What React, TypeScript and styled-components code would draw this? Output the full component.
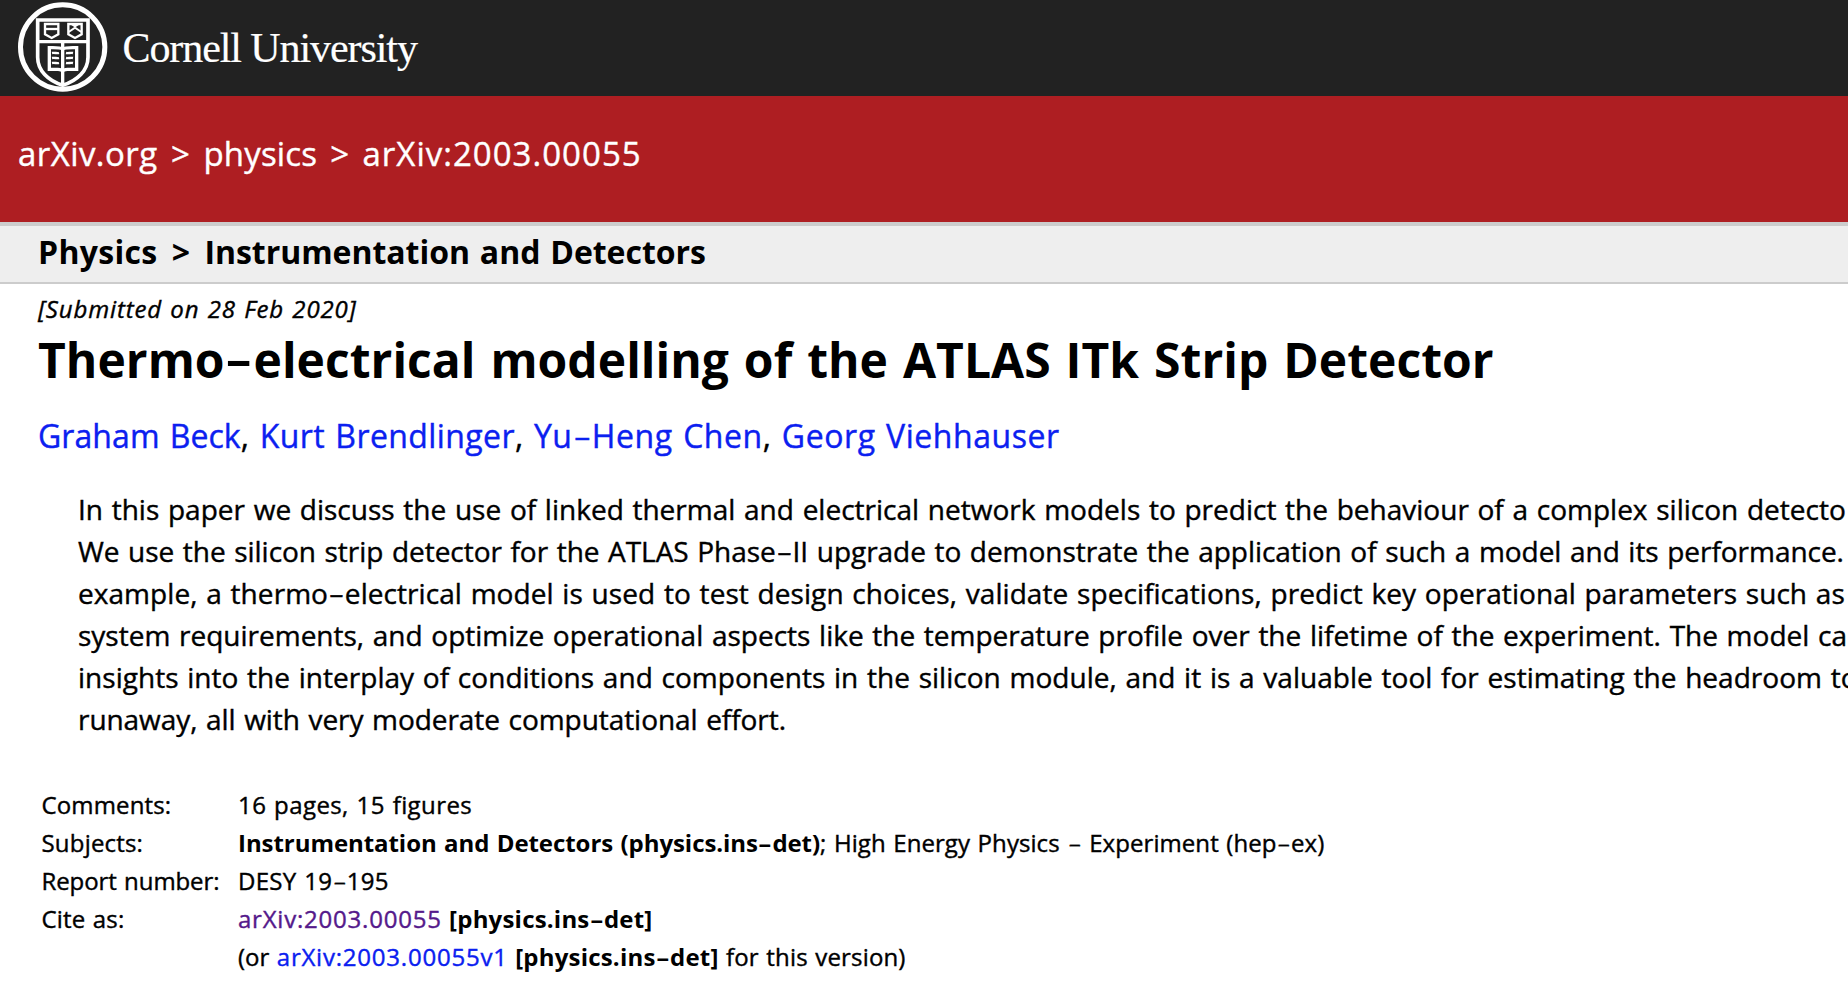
import React from "react";
import styled, { createGlobalStyle } from "styled-components";

const GlobalStyle = createGlobalStyle`
  * { box-sizing: border-box; word-spacing: 0.05em; }
  html, body { margin: 0; padding: 0; }
  body {
    background: #fff;
    color: #000;
    font-family: "Lucida Grande", "Open Sans", sans-serif;
    overflow: hidden;
  }
`;

const Page = styled.div`
  width: 100%;
  height: 988px;
  overflow: hidden;
  white-space: nowrap;
  -webkit-text-stroke: 0.4px currentColor;
`;

const UniversityBar = styled.div`
  display: flex;
  height: 96px;
  background: #222;
`;

const Seal = styled.svg`
  flex: none;
  width: 120px;
  height: 96px;
`;

const UniversityName = styled.div`
  padding-top: 24px;
  padding-left: 2.5px;
  font-family: "Palatino Linotype", "Liberation Serif", serif;
  font-size: 42px;
  line-height: 48px;
  letter-spacing: -1.08px;
  word-spacing: 0;
  color: #fff;
  -webkit-text-stroke-width: 0.2px;
`;

const Tracked = styled.span<{ $em: number }>`
  letter-spacing: ${(p) => p.$em}em;
`;

const WideHyphen = styled.span`
  display: inline-block;
  margin: 0 0.14em;
  letter-spacing: 0;
  transform: translateY(-0.05em) scale(1.7, 0.85);
  transform-origin: 50% 76%;
`;

const Chevron = styled.span<{ $gap: number }>`
  margin: 0 ${(p) => p.$gap}em;
`;

const Breadcrumbs = styled.nav`
  height: 126px;
  padding: 38px 0 0 18px;
  background: #ae1e22;
  color: #fff;
  font-size: 33px;
  line-height: 40px;
`;

const SubjectBar = styled.div`
  height: 62px;
  padding-left: 38px;
  border-top: 4px solid #ccc;
  border-bottom: 2px solid #ccc;
  background: #eee;
  font-size: 32px;
  font-weight: 700;
  line-height: 51px;
  -webkit-text-stroke-width: 0;
`;

const Article = styled.main`
  padding: 10px 0 0 38px;
`;

const Dateline = styled.div`
  font-size: 24px;
  font-style: italic;
  line-height: 30px;
  letter-spacing: 0.036em;
`;

const Title = styled.h1`
  margin: 7px 0 0;
  font-size: 48px;
  font-weight: 700;
  line-height: 58px;
  letter-spacing: 0.0008em;
  -webkit-text-stroke-width: 0;
`;

const Authors = styled.div`
  margin-top: 27px;
  font-size: 32px;
  line-height: 40px;
  letter-spacing: 0.0125em;
`;

const Link = styled.a<{ $visited?: boolean }>`
  color: ${(p) => (p.$visited ? "#551a8b" : "#0b20f0")};
  text-decoration: none;
`;

const Abstract = styled.blockquote`
  margin: 32px 0 0 40px;
  font-size: 28px;
  line-height: 42px;
`;

const Line = styled.div<{ $em: number }>`
  letter-spacing: ${(p) => p.$em}em;
`;

const Meta = styled.dl`
  display: grid;
  grid-template-columns: 196.5px auto;
  margin: 46px 0 0 3.5px;
  font-size: 24px;
  line-height: 38px;
`;

const Label = styled.dt``;

const Value = styled.dd`
  margin: 0;

  b {
    -webkit-text-stroke-width: 0;
  }
`;

const abstractLines: { text: string; em: number }[] = [
  { em: 0.0003, text: "In this paper we discuss the use of linked thermal and electrical network models to predict the behaviour of a complex silicon detecto" },
  { em: -0.0015, text: "We use the silicon strip detector for the ATLAS Phase-II upgrade to demonstrate the application of such a model and its performance." },
  { em: 0.0021, text: "example, a thermo-electrical model is used to test design choices, validate specifications, predict key operational parameters such as" },
  { em: 0, text: "system requirements, and optimize operational aspects like the temperature profile over the lifetime of the experiment. The model ca" },
  { em: 0.0009, text: "insights into the interplay of conditions and components in the silicon module, and it is a valuable tool for estimating the headroom to" },
  { em: -0.002, text: "runaway, all with very moderate computational effort." },
];

const authors: { name: string; em: number }[] = [
  { name: "Graham Beck", em: 0.0025 },
  { name: "Kurt Brendlinger", em: 0.0125 },
  { name: "Yu-Heng Chen", em: 0.018 },
  { name: "Georg Viehhauser", em: 0.0175 },
];

/* Sets every hyphen of a text in its wide form. */
function Text({ children }: { children: string }) {
  return (
    <>
      {children.split("-").map((part, i) => (
        <React.Fragment key={i}>
          {i > 0 && <WideHyphen>-</WideHyphen>}
          {part}
        </React.Fragment>
      ))}
    </>
  );
}

function CornellSeal() {
  return (
    <Seal viewBox="0 0 360 288" fill="none" stroke="#fff">
      <circle cx="188" cy="141" r="126.5" strokeWidth="15" />
      <path d="M113 60H264V172C264 212 232 242 188 256C144 242 113 212 113 172Z" strokeWidth="11" />
      <path d="M113 125H264" strokeWidth="10" />
      <path d="M188 125V256" strokeWidth="10" />
      <path d="M135 72H175V103L155 114L135 103Z" strokeWidth="7" />
      <path d="M135 87H175" strokeWidth="7" />
      <path d="M205 72H245V103L225 114L205 103Z" strokeWidth="7" />
      <path d="M206 96L225 83L244 96M214 72L225 79L236 72" strokeWidth="6" />
      <path d="M188 147C180 142 168 143 148 143V208H174C181 208 188 211 188 215C188 211 195 208 202 208H230V143C208 143 196 142 188 147" strokeWidth="10" />
      <path d="M156 159C164 157 170 161 177 159M156 174C164 172 170 176 177 174M156 189C164 187 170 191 177 189M198 159C206 161 211 157 219 159M198 174C206 176 211 172 219 174M198 189C206 191 211 187 219 189" strokeWidth="7" />
    </Seal>
  );
}

export default function App() {
  return (
    <Page>
      <GlobalStyle />
      <UniversityBar>
        <CornellSeal />
        <UniversityName>Cornell University</UniversityName>
      </UniversityBar>
      <Breadcrumbs>
        <Tracked $em={0.013}>arXiv.org</Tracked> <Chevron $gap={0.1}>&gt;</Chevron>{" "}
        <Tracked $em={0.005}>physics</Tracked> <Chevron $gap={0.09}>&gt;</Chevron>{" "}
        <Tracked $em={0.031}>arXiv:2003.00055</Tracked>
      </Breadcrumbs>
      <SubjectBar>
        <Tracked $em={0.01}>Physics</Tracked> <Chevron $gap={0.135}>&gt;</Chevron>{" "}
        <Tracked $em={-0.001}>Instrumentation and Detectors</Tracked>
      </SubjectBar>
      <Article>
        <Dateline>[Submitted on 28 Feb 2020]</Dateline>
        <Title><Text>Thermo-electrical modelling of the ATLAS ITk Strip Detector</Text></Title>
        <Authors>
          {authors.map(({ name, em }, i) => (
            <React.Fragment key={name}>
              {i > 0 && ", "}
              <Tracked $em={em}><Link><Text>{name}</Text></Link></Tracked>
            </React.Fragment>
          ))}
        </Authors>
        <Abstract>
          {abstractLines.map((line) => (
            <Line key={line.text} $em={line.em}><Text>{line.text}</Text></Line>
          ))}
        </Abstract>
        <Meta>
          <Label><Tracked $em={0.006}>Comments:</Tracked></Label>
          <Value><Tracked $em={0.017}>16 pages, 15 figures</Tracked></Value>
          <Label><Tracked $em={0.008}>Subjects:</Tracked></Label>
          <Value>
            <Tracked as="b" $em={-0.0025}><Text>Instrumentation and Detectors (physics.ins-det)</Text></Tracked>
            <Tracked $em={0.003}><Text>; High Energy Physics - Experiment (hep-ex)</Text></Tracked>
          </Value>
          <Label><Tracked $em={-0.0035}>Report number:</Tracked></Label>
          <Value><Tracked $em={0.012}><Text>DESY 19-195</Text></Tracked></Value>
          <Label><Tracked $em={0.006}>Cite as:</Tracked></Label>
          <Value>
            <Tracked $em={0.0325}><Link $visited>arXiv:2003.00055</Link></Tracked>{" "}
            <Tracked as="b" $em={0.0085}><Text>[physics.ins-det]</Text></Tracked>
          </Value>
          <Label />
          <Value>
            (or <Tracked $em={0.0325}><Link>arXiv:2003.00055v1</Link></Tracked>{" "}
            <Tracked as="b" $em={0.0085}><Text>[physics.ins-det]</Text></Tracked>{" "}
            <Tracked $em={0.0065}>for this version)</Tracked>
          </Value>
        </Meta>
      </Article>
    </Page>
  );
}
